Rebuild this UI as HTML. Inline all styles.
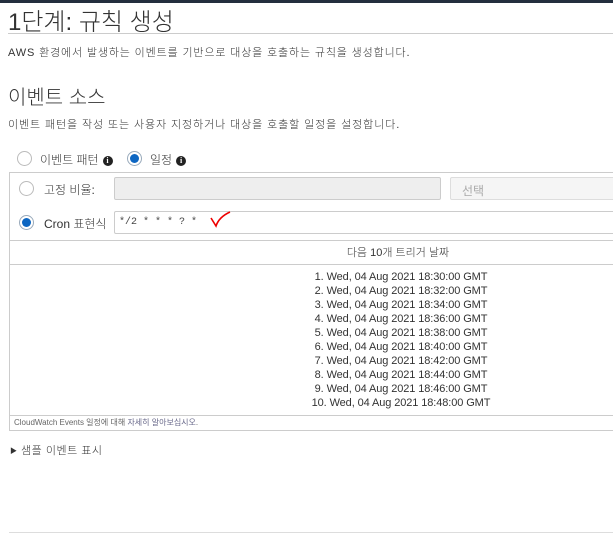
<!DOCTYPE html>
<html><head><meta charset="utf-8"><style>
*{margin:0;padding:0;box-sizing:border-box}
body{width:613px;height:537px;background:#fff;position:relative;overflow:hidden;font-family:"Liberation Sans","Noto Sans CJK KR",sans-serif;color:#333}
.a{position:absolute;white-space:nowrap}
.r{position:absolute;width:15px;height:15px;border-radius:50%;border:1px solid #bbb;background:#fff}
.r.on{border-color:#9ab}
.r.on::after{content:"";position:absolute;left:2px;top:2px;width:9px;height:9px;border-radius:50%;background:#0d66c2}
.i{display:inline-block;width:10px;height:10px;border-radius:50%;background:#222;color:#fff;font-size:8px;font-weight:bold;text-align:center;line-height:10px;font-family:"Liberation Serif",serif;vertical-align:1px;margin-left:4px}
.hl{position:absolute;height:1px;background:#ccc}
.d{position:absolute;left:201px;width:400px;text-align:center;font-size:11px;color:#333;letter-spacing:-0.1px}
</style></head><body>
<div class="a" style="left:0;top:0;width:613px;height:3px;background:#232f3e"></div>
<div class="a" style="left:8px;top:2px;font-size:24px;color:#333;font-weight:300">1단계: 규칙 생성</div>
<div class="hl" style="left:8px;top:33px;width:605px"></div>
<div class="a" style="left:8px;top:44px;font-size:11px;font-weight:300;letter-spacing:0.85px">AWS 환경에서 발생하는 이벤트를 기반으로 대상을 호출하는 규칙을 생성합니다.</div>
<div class="a" style="left:8px;top:81px;font-size:20px;font-weight:300">이벤트 소스</div>
<div class="a" style="left:8px;top:116px;font-size:11px;font-weight:300;letter-spacing:0.9px">이벤트 패턴을 작성 또는 사용자 지정하거나 대상을 호출할 일정을 설정합니다.</div>
<div class="r" style="left:17px;top:151px"></div>
<div class="a" style="left:40px;top:151px;font-size:12px;font-weight:300">이벤트 패턴<span class="i">i</span></div>
<div class="r on" style="left:127px;top:151px"></div>
<div class="a" style="left:150px;top:151px;font-size:12px;font-weight:300">일정<span class="i">i</span></div>
<div class="a" style="left:9px;top:172px;width:610px;height:259px;border:1px solid #ccc"></div>
<div class="r" style="left:19px;top:181px"></div>
<div class="a" style="left:44px;top:181px;font-size:12px;font-weight:300">고정 비율:</div>
<div class="a" style="left:114px;top:177px;width:327px;height:23px;background:#eee;border:1px solid #ccc;border-radius:2px"></div>
<div class="a" style="left:450px;top:177px;width:170px;height:23px;background:#f5f5f5;border:1px solid #ddd;border-radius:2px;font-size:12px;color:#aaa;padding:4px 11px">선택</div>
<div class="r on" style="left:19px;top:215px"></div>
<div class="a" style="left:44px;top:215px;font-size:12px;font-weight:300">Cron 표현식</div>
<div class="a" style="left:114px;top:211px;width:510px;height:23px;border:1px solid #ccc;border-radius:2px;font-family:'Liberation Mono',monospace;font-size:10px;color:#444;padding:5px 4px">*/2 * * * ? *</div>
<svg class="a" style="left:208px;top:209px" width="24" height="20"><path d="M3 9 L8 17 Q11 8 22 3" stroke="#e00" stroke-width="1.6" fill="none"/></svg>
<div class="hl" style="left:9px;top:240px;width:604px"></div>
<div class="a" style="left:198px;top:244px;width:400px;text-align:center;font-size:11px;font-weight:300">다음 10개 트리거 날짜</div>
<div class="hl" style="left:9px;top:264px;width:604px"></div>
<div class="d" style="top:271px">1. Wed, 04 Aug 2021 18:30:00 GMT</div>
<div class="d" style="top:285px">2. Wed, 04 Aug 2021 18:32:00 GMT</div>
<div class="d" style="top:299px">3. Wed, 04 Aug 2021 18:34:00 GMT</div>
<div class="d" style="top:313px">4. Wed, 04 Aug 2021 18:36:00 GMT</div>
<div class="d" style="top:327px">5. Wed, 04 Aug 2021 18:38:00 GMT</div>
<div class="d" style="top:341px">6. Wed, 04 Aug 2021 18:40:00 GMT</div>
<div class="d" style="top:355px">7. Wed, 04 Aug 2021 18:42:00 GMT</div>
<div class="d" style="top:369px">8. Wed, 04 Aug 2021 18:44:00 GMT</div>
<div class="d" style="top:383px">9. Wed, 04 Aug 2021 18:46:00 GMT</div>
<div class="d" style="top:397px">10. Wed, 04 Aug 2021 18:48:00 GMT</div>
<div class="hl" style="left:9px;top:415px;width:604px"></div>
<div class="a" style="left:14px;top:417px;font-size:8px;color:#666">CloudWatch Events 일정에 대해 <span style="color:#668">자세히 알아보십시오</span>.</div>
<div class="a" style="left:10px;top:442px;font-size:11px;font-weight:300;letter-spacing:0.5px"><span style="font-size:7px;vertical-align:1px">▶</span> 샘플 이벤트 표시</div>
<div class="hl" style="left:9px;top:532px;width:604px;background:#ddd"></div>
</body></html>
